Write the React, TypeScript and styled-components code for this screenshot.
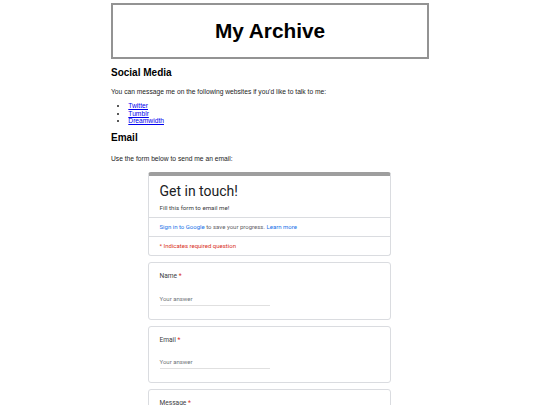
import React from "react";
import styled, { createGlobalStyle } from "styled-components";

const Global = createGlobalStyle`
  html, body { margin: 0; padding: 0; background: #fff; }
  body { font-family: "Liberation Sans", Arial, sans-serif; color: #222; }
`;

const Page = styled.div`
  width: 318px;
  margin: 0 auto;
  padding-top: 3px;
`;

const TitleBox = styled.header`
  box-sizing: border-box;
  height: 56px;
  border: 2px solid #939393;
  display: flex;
  align-items: center;
  justify-content: center;
`;

const Title = styled.h1`
  margin: 0;
  font-size: 20.8px;
  font-weight: 700;
  color: #000;
  line-height: 24px;
`;

const Heading = styled.h2<{ $top: number }>`
  margin: ${(p) => p.$top}px 0 0;
  font-size: 10px;
  line-height: 12px;
  font-weight: 700;
  color: #000;
`;

const Text = styled.p<{ $top: number }>`
  margin: ${(p) => p.$top}px 0 0;
  font-size: 6.7px;
  line-height: 7.7px;
  color: #222;
`;

const List = styled.ul`
  margin: 6.3px 0 0;
  padding-left: 17.3px;
  font-size: 6.7px;
  line-height: 7.7px;
`;

const Link = styled.a`
  color: #0000ee;
  text-decoration: underline;
`;

const Form = styled.div`
  width: 243px;
  margin: 9px 0 0 37px;
  display: flex;
  flex-direction: column;
  gap: 6px;
  font-family: Roboto, "Noto Sans", sans-serif;
  color: #202124;
`;

const Card = styled.section<{ $accent?: boolean }>`
  box-sizing: border-box;
  border: 1px solid #dadce0;
  border-top: ${(p) => (p.$accent ? "4px solid #9e9e9e" : "1px solid #dadce0")};
  border-radius: 3px;
  background: #fff;
`;

const FormHead = styled.div`
  padding: 6px 10.5px 5px;
  border-bottom: 1px solid #dadce0;
`;

const FormTitle = styled.div`
  font-size: 14px;
  line-height: 18px;
  font-weight: 400;
  color: #202124;
`;

const FormDesc = styled.div`
  margin-top: 4px;
  font-size: 6.2px;
  line-height: 8px;
  color: #3c4043;
`;

const InfoRow = styled.div<{ $last?: boolean }>`
  height: 18px;
  padding: 0 10.5px;
  display: flex;
  align-items: center;
  font-size: 6px;
  color: #5f6368;
  border-bottom: ${(p) => (p.$last ? "none" : "1px solid #dadce0")};
`;

const Blue = styled.span`
  color: #1a73e8;
`;

const Red = styled.span`
  color: #d93025;
`;

const Question = styled.div`
  padding: 9px 10.5px 13px;
`;

const Label = styled.div`
  font-size: 6.6px;
  line-height: 9px;
  color: #3c4043;
`;

const Answer = styled.div`
  width: 50%;
  margin-top: 13.7px;
  padding-bottom: 2px;
  border-bottom: 1px solid #e0e0e0;
  font-size: 6px;
  line-height: 8px;
  color: #70757a;
`;

export default function App() {
  return (
    <>
      <Global />
      <Page>
        <TitleBox>
          <Title>My Archive</Title>
        </TitleBox>
        <Heading $top={8}>Social Media</Heading>
        <Text $top={8.9}>
          You can message me on the following websites if you'd like to talk to me:
        </Text>
        <List>
          <li><Link href="#">Twitter</Link></li>
          <li><Link href="#">Tumblr</Link></li>
          <li><Link href="#">Dreamwidth</Link></li>
        </List>
        <Heading $top={7}>Email</Heading>
        <Text $top={11.2}>Use the form below to send me an email:</Text>
        <Form>
          <Card $accent>
            <FormHead>
              <FormTitle>Get in touch!</FormTitle>
              <FormDesc>Fill this form to email me!</FormDesc>
            </FormHead>
            <InfoRow>
              <Blue>Sign in to Google</Blue>&nbsp;to save your progress.&nbsp;<Blue>Learn more</Blue>
            </InfoRow>
            <InfoRow $last>
              <Red>* Indicates required question</Red>
            </InfoRow>
          </Card>
          <Card>
            <Question>
              <Label>Name <Red>*</Red></Label>
              <Answer>Your answer</Answer>
            </Question>
          </Card>
          <Card>
            <Question>
              <Label>Email <Red>*</Red></Label>
              <Answer>Your answer</Answer>
            </Question>
          </Card>
          <Card>
            <Question>
              <Label>Message <Red>*</Red></Label>
              <Answer>Your answer</Answer>
            </Question>
          </Card>
        </Form>
      </Page>
    </>
  );
}
